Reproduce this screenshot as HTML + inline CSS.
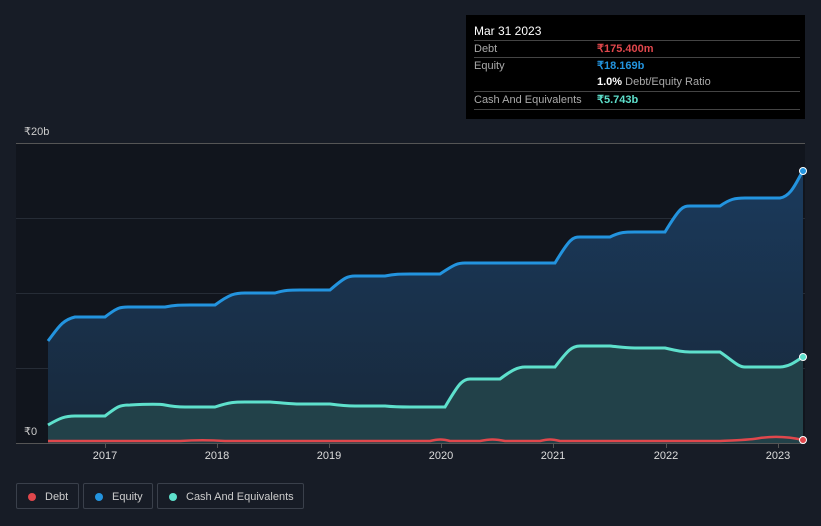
<!DOCTYPE html>
<html><head><style>
body{margin:0;width:821px;height:526px;background:#171c26;font-family:"Liberation Sans",sans-serif;overflow:hidden;position:relative}
.tt{position:absolute;left:466px;top:15px;width:339px;height:104px;background:#000;color:#fff;font-size:11px}
.row{position:absolute;left:8px;width:326px;border-top:1px solid #444;height:17px;line-height:17px;color:#aaa}
.row b{position:absolute;left:123px;font-weight:bold}
.leg{position:absolute;top:483px;height:26px;border:1px solid #3a404b;border-radius:2px;color:#ccc;font-size:11px;line-height:26px;box-sizing:border-box}
.leg i{position:absolute;left:11px;top:9px;width:8px;height:8px;border-radius:50%}
.yr{position:absolute;top:450px;color:#ddd;font-size:11px;width:40px;text-align:center}
</style></head><body>
<svg width="821" height="526" style="position:absolute;left:0;top:0">
<defs>
<linearGradient id="ge" x1="0" y1="0" x2="0" y2="1"><stop offset="0" stop-color="#1a3a5c"/><stop offset="1" stop-color="#18283a"/></linearGradient>
</defs>
<rect x="16" y="143" width="789" height="300" fill="#11151d"/>
<line x1="16" y1="143.5" x2="805" y2="143.5" stroke="#555" />
<g stroke="#262c36"><line x1="16" y1="218.5" x2="805" y2="218.5"/><line x1="16" y1="293.5" x2="805" y2="293.5"/><line x1="16" y1="368.5" x2="805" y2="368.5"/></g>
<path d="M48,341 C58,328 62,320 75,317 L105,317 C118,307 120,307 130,307 L165,307 C175,305 180,305 190,305 L215,305 C230,294 235,293 245,293 L275,293 C285,290 290,290 300,290 L330,290 C345,277 348,276 355,276 L385,276 C395,274 400,274 410,274 L440,274 C455,264 458,263 465,263 L555,263 C570,238 573,237 580,237 L610,237 C620,232 625,232 635,232 L665,232 C680,207 683,206 690,206 L720,206 C730,199 735,198 745,198 L780,198 C792,196 797,180 803,171 L803,443 L48,443Z" fill="url(#ge)"/>
<path d="M48,425 C60,418 65,416 75,416 L105,416 C118,406 120,405 130,405 C150,404 160,404 165,405 C175,407 180,407 185,407 L215,407 C230,402 235,402 245,402 L270,402 C285,403 290,404 300,404 L330,404 C345,406 350,406 355,406 L385,406 C395,407 400,407 410,407 L445,407 C458,385 462,379 470,379 L500,379 C512,370 518,367 525,367 L555,367 C568,350 572,346 580,346 L610,346 C620,347 625,348 635,348 L665,348 C678,351 683,352 690,352 L720,352 C732,360 738,367 745,367 L780,367 C792,366 797,360 803,357 L803,443 L48,443Z" fill="#224149"/>
<path d="M48,341 C58,328 62,320 75,317 L105,317 C118,307 120,307 130,307 L165,307 C175,305 180,305 190,305 L215,305 C230,294 235,293 245,293 L275,293 C285,290 290,290 300,290 L330,290 C345,277 348,276 355,276 L385,276 C395,274 400,274 410,274 L440,274 C455,264 458,263 465,263 L555,263 C570,238 573,237 580,237 L610,237 C620,232 625,232 635,232 L665,232 C680,207 683,206 690,206 L720,206 C730,199 735,198 745,198 L780,198 C792,196 797,180 803,171" fill="none" stroke="#2394df" stroke-width="3"/>
<path d="M48,425 C60,418 65,416 75,416 L105,416 C118,406 120,405 130,405 C150,404 160,404 165,405 C175,407 180,407 185,407 L215,407 C230,402 235,402 245,402 L270,402 C285,403 290,404 300,404 L330,404 C345,406 350,406 355,406 L385,406 C395,407 400,407 410,407 L445,407 C458,385 462,379 470,379 L500,379 C512,370 518,367 525,367 L555,367 C568,350 572,346 580,346 L610,346 C620,347 625,348 635,348 L665,348 C678,351 683,352 690,352 L720,352 C732,360 738,367 745,367 L780,367 C792,366 797,360 803,357" fill="none" stroke="#5ee0cc" stroke-width="3"/>
<path d="M48,441 L180,441 C195,440 210,440 225,441 L430,441 C438,439 443,439 450,441 L480,441 C490,439 495,439 505,441 L540,441 C548,439 552,439 560,441 L720,441 C740,440 750,440 760,438 C775,436 790,437 803,440" fill="none" stroke="#e0474c" stroke-width="2.5"/>
<line x1="16" y1="443.5" x2="805" y2="443.5" stroke="#555"/>
<g stroke="#555"><line x1="105.5" y1="443" x2="105.5" y2="448"/><line x1="217.5" y1="443" x2="217.5" y2="448"/><line x1="329.5" y1="443" x2="329.5" y2="448"/><line x1="441.5" y1="443" x2="441.5" y2="448"/><line x1="553.5" y1="443" x2="553.5" y2="448"/><line x1="666.5" y1="443" x2="666.5" y2="448"/><line x1="778.5" y1="443" x2="778.5" y2="448"/></g>
<circle cx="803" cy="171" r="3.5" fill="#2394df" stroke="#fff" stroke-width="1"/>
<circle cx="803" cy="357" r="3.5" fill="#5ee0cc" stroke="#fff" stroke-width="1"/>
<circle cx="803" cy="440" r="3.5" fill="#e0474c" stroke="#fff" stroke-width="1"/>
</svg>
<div style="position:absolute;left:24px;top:125px;color:#ccc;font-size:11px">₹20b</div>
<div style="position:absolute;left:24px;top:425px;color:#ccc;font-size:11px">₹0</div>
<div class="yr" style="left:85px">2017</div><div class="yr" style="left:197px">2018</div><div class="yr" style="left:309px">2019</div><div class="yr" style="left:421px">2020</div><div class="yr" style="left:533px">2021</div><div class="yr" style="left:646px">2022</div><div class="yr" style="left:758px">2023</div>
<div class="tt">
<div style="position:absolute;left:8px;top:9px;font-size:12px">Mar 31 2023</div>
<div class="row" style="top:25px">Debt<b style="color:#e0474c">₹175.400m</b></div>
<div class="row" style="top:42px">Equity<b style="color:#2394df">₹18.169b</b></div>
<div class="row" style="top:59px;border:0"><b style="color:#fff">1.0% <span style="color:#aaa;font-weight:normal">Debt/Equity Ratio</span></b></div>
<div class="row" style="top:76px">Cash And Equivalents<b style="color:#5ee0cc">₹5.743b</b></div>
<div class="row" style="top:94px;height:0"></div>
</div>
<div class="leg" style="left:16px;width:63px"><i style="background:#e0474c"></i><span style="position:absolute;left:28px">Debt</span></div>
<div class="leg" style="left:83px;width:70px"><i style="background:#2394df"></i><span style="position:absolute;left:28px">Equity</span></div>
<div class="leg" style="left:157px;width:147px"><i style="background:#5ee0cc"></i><span style="position:absolute;left:28px">Cash And Equivalents</span></div>
</body></html>
